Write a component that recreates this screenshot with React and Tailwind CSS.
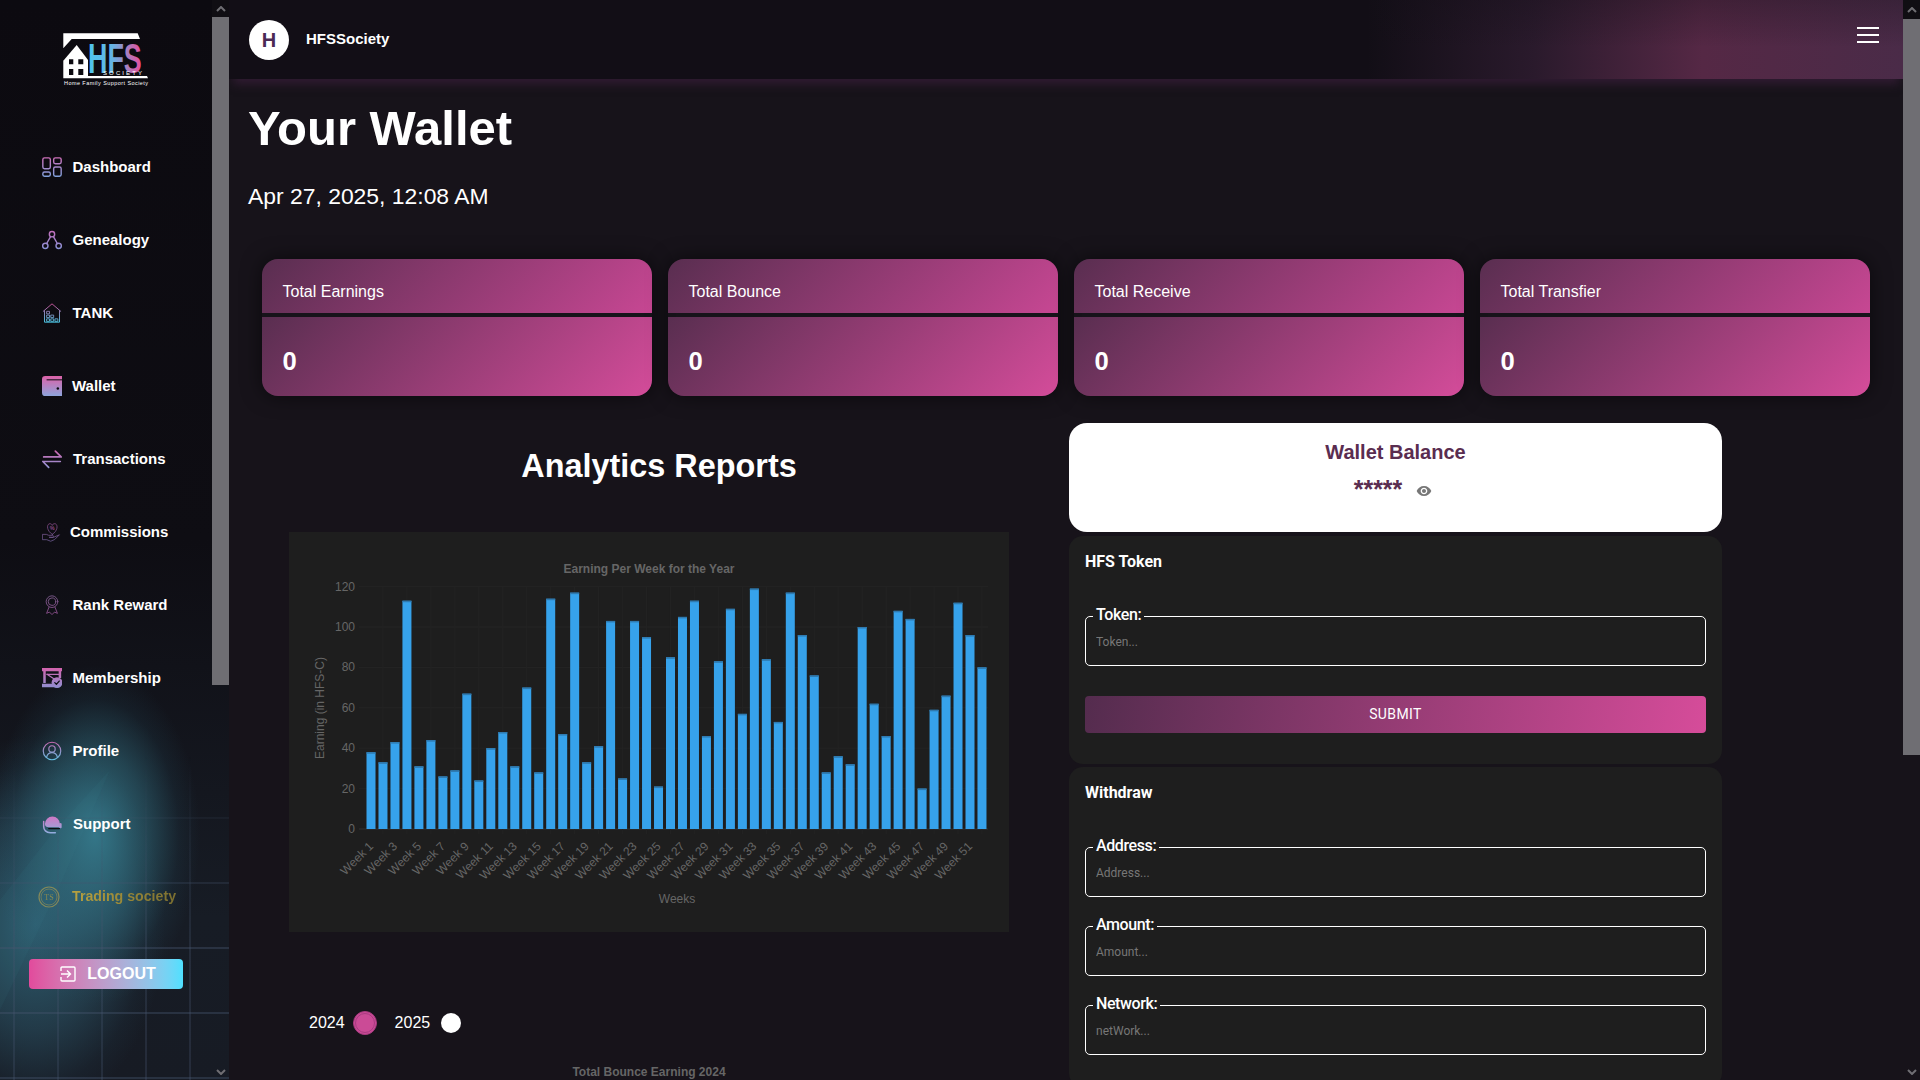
import React from 'react';

const weekValues = [38, 33, 43, 113, 31, 44, 26, 29, 67, 24, 40, 48, 31, 70, 28, 114, 47, 117, 33, 41, 103, 25, 103, 95, 21, 85, 105, 113, 46, 83, 109, 57, 119, 84, 53, 117, 96, 76, 28, 36, 32, 100, 62, 46, 108, 104, 20, 59, 66, 112, 96, 80];

const NavIcon = ({ id, from, to, children, className = 'w-5 h-5' }) => (
  <svg viewBox="0 0 24 24" className={`${className} shrink-0`} fill="none" stroke={`url(#${id})`} strokeWidth="1.7" strokeLinecap="round" strokeLinejoin="round">
    <defs>
      <linearGradient id={id} gradientUnits="userSpaceOnUse" x1="0" y1="0" x2="0" y2="24">
        <stop offset="0" stopColor={from} />
        <stop offset="1" stopColor={to} />
      </linearGradient>
    </defs>
    {children}
  </svg>
);

const navItems = [
  {
    label: 'Dashboard',
    icon: (
      <NavIcon id="ic-dash" from="#cf6db8" to="#7fa2dc">
        <rect x="1" y="1" width="9" height="13" rx="2" />
        <rect x="14" y="1" width="9" height="7" rx="2" />
        <rect x="1" y="18" width="9" height="5" rx="2" />
        <rect x="14" y="12" width="9" height="11" rx="2" />
      </NavIcon>
    ),
  },
  {
    label: 'Genealogy',
    icon: (
      <NavIcon id="ic-gen" from="#c56cb9" to="#8595d8">
        <circle cx="12" cy="5" r="3.2" />
        <circle cx="4" cy="19" r="3.2" />
        <circle cx="20" cy="19" r="3.2" />
        <path d="M10.3 8 5.6 16.2M13.7 8l4.7 8.2" />
      </NavIcon>
    ),
  },
  {
    label: 'TANK',
    icon: (
      <NavIcon id="ic-tank" from="#c8488f" to="#45c4e0">
        <path d="M1.5 10 12 1l10.5 9" strokeWidth="1.2" />
        <path d="M3 9v14h18V9" strokeWidth="1.2" />
        <path d="M6 10h3v3H6zM6 14.5h3v3H6zM11 14.5h3v3h-3zM6 19h3v3H6zM11 19h3v3h-3zM16 19h3v3h-3z" strokeWidth="1.1" />
      </NavIcon>
    ),
  },
  {
    label: 'Wallet',
    icon: (
      <NavIcon id="ic-wal" from="#dc62a8" to="#8ea4dc">
        <path d="M4 0h20v24H4a4 4 0 0 1-4-4V4a4 4 0 0 1 4-4z" fill="url(#ic-wal)" stroke="none" />
        <path d="M6 4.6h18" stroke="#0c0a10" strokeWidth="1.2" />
        <circle cx="19" cy="15" r="1.5" fill="#0c0a10" stroke="none" />
      </NavIcon>
    ),
    labelClass: 'ml-[10px]',
  },
  {
    label: 'Transactions',
    icon: (
      <NavIcon id="ic-tr" from="#d062ac" to="#8f9ad8">
        <path d="M2 9.5h21M16 2.5l7 7" strokeWidth="2" />
        <path d="M1 15h21M1 15l7 7" strokeWidth="2" />
      </NavIcon>
    ),
    labelClass: 'ml-[11px]',
  },
  {
    label: 'Commissions',
    icon: (
      <NavIcon id="ic-com" from="#8a4a88" to="#6a5a90" className="w-[19px] h-5">
        <path d="M13 15C5 10 6 1.5 10 1.5c1.6 0 2.6 1 3 2.2.4-1.2 1.4-2.2 3-2.2 4 0 5 8.500-3 13.500z" strokeWidth="1" />
        <path d="M1 15h4.500l3 1.200h4.500c2 0 2 2.500 0 2.500H9l5 .3 8-3.500-6 6-5 2.200-5-2H1z" strokeWidth="1" />
        <text x="13" y="9.500" fontSize="7" textAnchor="middle" fill="#8a4a88" stroke="none" fontFamily="Liberation Sans" fontWeight="700">%</text>
      </NavIcon>
    ),
    labelClass: 'ml-[9px]',
  },
  {
    label: 'Rank Reward',
    icon: (
      <NavIcon id="ic-rank" from="#7b5a8c" to="#8a4c8a">
        <circle cx="12" cy="8" r="7" strokeWidth="1.100" />
        <circle cx="12" cy="8" r="4.500" strokeWidth="1.100" />
        <path d="M8.500 14.500 5.500 22l3.500-1.500 3 3 3-3 3.500 1.500-3-7.500" strokeWidth="1.100" />
      </NavIcon>
    ),
  },
  {
    label: 'Membership',
    icon: (
      <NavIcon id="ic-mem" from="#d363ad" to="#8f8fd0">
        <path d="M0 0h24v4H0zM1.500 4h3v14h-3zM0 19h15v4H0zM20 4h3v8h-3z" fill="url(#ic-mem)" stroke="none" />
        <path d="M6 7.500 16 14" strokeWidth="1.500" />
        <path d="M6 7.500h14" strokeWidth="1.500" />
        <circle cx="18" cy="17.500" r="6.500" fill="url(#ic-mem)" stroke="none" />
        <path d="m15.300 17.500 2 2 3.400-3.800" stroke="#0c0f14" strokeWidth="1.500" />
      </NavIcon>
    ),
  },
  {
    label: 'Profile',
    icon: (
      <NavIcon id="ic-pro" from="#d064ae" to="#5cc5e6">
        <circle cx="12" cy="12" r="10.500" strokeWidth="1.400" />
        <circle cx="12" cy="9.500" r="3.800" strokeWidth="1.400" />
        <path d="M5.500 19.500c1-4 3.800-5.500 6.500-5.500s5.500 1.500 6.500 5.500" strokeWidth="1.400" />
      </NavIcon>
    ),
  },
  {
    label: 'Support',
    icon: (
      <NavIcon id="ic-sup" from="#d86fc0" to="#8fb0e0">
        <path d="M3.500 12a9 9 0 0 1 18 0v4H8c-2.500 0-4.500-1.500-4.500-4z" fill="url(#ic-sup)" stroke="none" />
        <path d="M2 9v6c0 4 3 7.500 8 7.500h6" strokeWidth="1.800" />
        <path d="M21.500 11.500h1.500v5h-1.500z" fill="url(#ic-sup)" strokeWidth="1" />
        <path d="M8 17.500h13" stroke="#0c1014" strokeWidth="1.400" />
      </NavIcon>
    ),
    labelClass: 'ml-[11px]',
  },
];

const Logo = () => (
  <svg viewBox="0 0 90 56" className="h-[56px] w-[90px]">
    <defs>
      <linearGradient id="logo-hfs" x1="0" y1="0" x2="1" y2="0">
        <stop offset="0" stopColor="#4fc6ec" />
        <stop offset="0.45" stopColor="#64b4e4" />
        <stop offset="1" stopColor="#ea4c9c" />
      </linearGradient>
    </defs>
    <path d="M1.300 1.300h74.400l2.300 5.700H9.700L1.300 16.300z" fill="#fff" />
    <path d="M14.700 13 1.300 28.700v17.600H26V28z" fill="#fff" />
    <path d="M7 27.300h4.300v5H7zM16.300 27.300h5v5h-5zM7 37h4.300v6H7zM16.300 37h5v6h-5z" fill="#0c0a10" />
    <path d="M26 44h59l1 2.300H26z" fill="#fff" />
    <text transform="translate(26 41) scale(0.64 1)" fontSize="42" fontWeight="700" fill="url(#logo-hfs)" fontFamily="Liberation Sans">HFS</text>
    <text x="41" y="43" fontSize="6" fill="#fff" fontFamily="Liberation Sans" textLength="39" lengthAdjust="spacing">SOCIETY</text>
    <text x="2" y="53" fontSize="5.500" fill="#fff" fontFamily="Liberation Sans" textLength="84" lengthAdjust="spacing">Home Family Support Society</text>
  </svg>
);

const ScrollChevron = ({ down }) => (
  <svg viewBox="0 0 10 6" className={`h-[6px] w-[10px] ${down ? 'rotate-180' : ''}`} fill="none" stroke="#6f6e73" strokeWidth="2">
    <path d="M1 5l4-4 4 4" />
  </svg>
);

const Sidebar = () => (
  <aside className="relative flex h-screen w-[229px] shrink-0 bg-[radial-gradient(ellipse_105px_170px_at_95px_835px,rgba(53,122,140,0.95)_0%,rgba(50,112,130,0.5)_50%,rgba(40,90,110,0.15)_80%,transparent_100%),radial-gradient(ellipse_130px_190px_at_35px_925px,rgba(50,105,125,0.85)_0%,rgba(48,95,115,0.45)_55%,rgba(40,80,100,0.12)_85%,transparent_100%),linear-gradient(180deg,#0c0a10_0%,#0e0d13_50%,#171c25_85%,#171b24_100%)]">
    <div className="absolute inset-0 bg-[#3f8a9e]/8 [clip-path:polygon(110px_770px,60px_885px,0_1010px,0_900px,55px_830px)]"></div>
    <div className="absolute inset-0 bg-[linear-gradient(rgba(70,85,110,0.4)_2px,transparent_2px),linear-gradient(90deg,rgba(70,85,110,0.3)_2px,transparent_2px)] bg-[size:44px_65px] bg-[position:13px_37px] [mask-image:linear-gradient(180deg,transparent_70%,black_88%)]"></div>
    <div className="relative flex w-[212px] flex-col">
      <div className="flex h-[130px] justify-start pt-[32px] pl-[62px]">
        <Logo />
      </div>
      <nav className="flex flex-col">
        {navItems.map(item => (
          <a key={item.label} className="flex h-[73px] items-center pl-[42px]">
            {item.icon}
            <span className={`mt-[1px] text-[15px] font-bold text-white ${item.labelClass || 'ml-[10.5px]'}`}>{item.label}</span>
          </a>
        ))}
        <a className="flex h-[73px] items-center pl-[38px]">
          <svg viewBox="0 0 22 22" className="h-[22px] w-[22px] shrink-0 opacity-70" fill="none" stroke="#a89a50">
            <circle cx="11" cy="11" r="10" strokeWidth="1.200" />
            <circle cx="11" cy="11" r="8" strokeWidth="0.700" />
            <text x="11" y="14" fontSize="8" textAnchor="middle" fill="#b09c40" stroke="none" fontFamily="Liberation Serif">TS</text>
          </svg>
          <span className="mt-[1px] ml-[12px] bg-linear-to-r from-[#b8a240] to-[#7b6f30] bg-clip-text text-[14.2px] font-bold text-transparent">Trading society</span>
        </a>
      </nav>
      <button className="mt-[26px] ml-[29px] flex h-[30px] w-[154px] items-center justify-center gap-[11px] rounded-[4px] bg-linear-to-r from-[#e24a9c] to-[#4ee0ff] pl-[4px] text-[16px] font-bold text-white">
        <svg viewBox="0 0 16 16" className="h-4 w-4" fill="none" stroke="#fff" strokeWidth="1.400">
          <path d="M1 5V2a1 1 0 0 1 1-1h12a1 1 0 0 1 1 1v12a1 1 0 0 1-1 1H2a1 1 0 0 1-1-1v-3" />
          <path d="M1 8h9M7 4.500 10.500 8 7 11.500" />
        </svg>
        LOGOUT
      </button>
    </div>
    <div className="relative flex w-[17px] flex-col items-center">
      <div className="flex h-[17px] w-full items-center justify-center bg-[#100e13]"><ScrollChevron /></div>
      <div className="h-[668px] w-full bg-[#6f6e73]"></div>
      <div className="mt-auto flex h-[17px] items-center"><ScrollChevron down /></div>
    </div>
  </aside>
);

const StatCard = ({ title }) => (
  <div className="overflow-hidden rounded-[16px] shadow-[0_0_20px_rgba(0,0,0,0.55)]">
    <div className="flex h-[54px] items-center bg-[linear-gradient(135deg,#592e50,#c74793)] pt-[12px] pl-[20.5px] text-[16px] text-white">{title}</div>
    <div className="mt-[4px] flex h-[79px] items-center bg-[linear-gradient(135deg,#592e50,#d44c9a)] pt-[10px] pl-[20.5px] text-[25.6px] font-bold text-white">0</div>
  </div>
);

const BarChart = () => {
  const x0 = 76;
  const step = 11.98;
  const base = 297;
  const unit = 2.02;
  return (
    <svg viewBox="0 0 720 400" className="block h-[400px] w-[720px] bg-[#1e1e1e]" fontFamily="Liberation Sans" fill="#666">
      <text x="360" y="41" textAnchor="middle" fontSize="12" fontWeight="700">Earning Per Week for the Year</text>
      {[0, 20, 40, 60, 80, 100, 120].map(v => (
        <g key={v}>
          <line x1="70" x2="699" y1={base - v * unit} y2={base - v * unit} stroke={v === 0 ? '#333' : '#242424'} />
          <text x="66" y={base - v * unit + 4} textAnchor="end" fontSize="12">{v}</text>
        </g>
      ))}
      {weekValues.map((v, i) => i % 2 === 1 && (
        <line key={i} x1={x0 + (i + 0.5) * step} x2={x0 + (i + 0.5) * step} y1="55" y2={base + 5} stroke="#232323" />
      ))}
      {weekValues.map((v, i) => (
        <g key={i}>
          <rect x={x0 + i * step + 1.5} y={base - v * unit} width="9" height={v * unit} fill="#36a2eb" />
          <rect x={x0 + i * step + 1.5} y={base - v * unit} width="9" height="1.500" fill="#2f7ab0" />
        </g>
      ))}
      {weekValues.map((v, i) => i % 2 === 0 && (
        <text key={i} x={x0 + (i + 0.5) * step + 3} y={base + 18} textAnchor="end" fontSize="12" transform={`rotate(-45 ${x0 + (i + 0.5) * step + 3} ${base + 18})`}>
          Week {i + 1}
        </text>
      ))}
      <text x="388" y="371" textAnchor="middle" fontSize="12">Weeks</text>
      <text transform="translate(35 176) rotate(-90)" textAnchor="middle" fontSize="12">Earning (in HFS-C)</text>
    </svg>
  );
};

const OutlinedField = ({ label, placeholder, className = '' }) => (
  <fieldset className={`h-[60px] rounded-[5px] border border-white ${className}`}>
    <legend className="ml-[7px] px-[3px] text-[16px] leading-[20px] font-medium tracking-[-0.4px] text-white">
      <span className="relative -top-[1px]">{label}</span>
    </legend>
    <input placeholder={placeholder} className="block h-[32px] w-full bg-transparent pl-[10px] text-[12px] text-white outline-none placeholder:text-[#777]" />
  </fieldset>
);

const App = () => (
  <div className="flex h-screen w-[1920px] overflow-hidden bg-[#17131a] font-['Liberation_Sans',Arial,sans-serif]">
    <Sidebar />
    <main className="min-w-0 flex-1 overflow-hidden">
      <header className="flex h-[79px] items-center justify-between bg-[linear-gradient(180deg,rgba(18,14,22,0.3),transparent_60%),linear-gradient(90deg,#120e16_0%,#120e16_68%,#2a1a2c_78%,#552845_88%,#4a2b48_100%)] pr-[24px] pl-[20px] shadow-[0_9px_9px_-4px_rgba(70,35,70,0.55)]">
        <div className="flex items-center">
          <div className="flex h-10 w-10 items-center justify-center rounded-full bg-white text-[20px] font-bold text-[#4b2a55]">H</div>
          <span className="ml-[17px] text-[15px] font-bold text-white">HFSSociety</span>
        </div>
        <div className="-mt-[9px] flex w-[22px] flex-col gap-[5px]">
          <div className="h-[2px] bg-white"></div>
          <div className="h-[2px] bg-white"></div>
          <div className="h-[2px] bg-white"></div>
        </div>
      </header>

      <div className="pt-[20px] pl-[19px]">
        <h1 className="text-[49px] leading-[58px] font-bold text-white">Your Wallet</h1>
        <p className="mt-[26px] text-[22.9px] leading-[26px] text-white">Apr 27, 2025, 12:08 AM</p>
      </div>

      <div className="mt-[50px] ml-[33px] grid w-[1608px] grid-cols-4 gap-4">
        {['Total Earnings', 'Total Bounce', 'Total Receive', 'Total Transfier'].map(t => (
          <StatCard key={t} title={t} />
        ))}
      </div>

      <div className="mt-[27px] ml-[20px] flex">
        <section className="w-[820px] shrink-0 pt-[24px]">
          <h2 className="text-center text-[32.4px] leading-[38px] font-bold text-white">Analytics Reports</h2>
          <div className="mt-[47px] ml-[40px]">
            <BarChart />
          </div>
          <div className="mt-[79px] ml-[60px] flex h-[24px] items-center text-[16px] text-white">
            <span>2024</span>
            <span className="ml-[8px] h-6 w-6 rounded-full border border-[#a83a80] bg-[#cb4b96] outline-1 -outline-offset-3 outline-[#a83a80]"></span>
            <span className="ml-[18px]">2025</span>
            <span className="ml-[11px] h-5 w-5 rounded-full bg-white"></span>
          </div>
          <p className="mt-[30px] ml-[40px] w-[720px] text-center text-[12px] leading-[14px] font-bold text-[#666]">Total Bounce Earning 2024</p>
        </section>

        <section className="w-[653px] shrink-0 font-['Roboto',sans-serif]">
          <div className="flex h-[109px] flex-col items-center rounded-[18px] bg-white pt-[16px] font-['Liberation_Sans',sans-serif] text-[#5a2d50]">
            <h3 className="text-[20px] leading-[26px] font-bold">Wallet Balance</h3>
            <div className="mt-[10px] mr-[5px] flex items-center">
              <span className="text-[25px] leading-[28px] font-bold">*****</span>
              <svg viewBox="0 0 24 24" className="mt-[4px] ml-[14px] h-4 w-4" fill="#777">
                <path d="M12 4.5C7 4.5 2.730 7.610 1 12c1.730 4.390 6 7.500 11 7.500s9.270-3.110 11-7.500c-1.730-4.390-6-7.500-11-7.500zM12 17c-2.760 0-5-2.240-5-5s2.240-5 5-5 5 2.240 5 5-2.240 5-5 5zm0-8c-1.660 0-3 1.340-3 3s1.340 3 3 3 3-1.340 3-3-1.340-3-3-3z" />
              </svg>
            </div>
          </div>

          <div className="mt-[4px] h-[228px] rounded-[14px] bg-[#1e1e1e] px-[16px] pt-[16px]">
            <h4 className="text-[16px] leading-[20px] font-bold text-white">HFS Token</h4>
            <OutlinedField label="Token:" placeholder="Token..." className="mt-[34px]" />
            <button className="mt-[30px] h-[37px] w-full rounded-[4px] bg-[linear-gradient(100deg,#542c4e,#d64c9a)] text-[14px] tracking-[0.4px] text-white">SUBMIT</button>
          </div>

          <div className="mt-[3px] h-[320px] rounded-[14px] bg-[#1e1e1e] px-[16px] pt-[16px]">
            <h4 className="text-[16px] leading-[20px] font-bold text-white">Withdraw</h4>
            <OutlinedField label="Address:" placeholder="Address..." className="mt-[34px]" />
            <OutlinedField label="Amount:" placeholder="Amount..." className="mt-[19px]" />
            <OutlinedField label="Network:" placeholder="netWork..." className="mt-[19px]" />
          </div>
        </section>
      </div>
    </main>
    <div className="relative flex h-screen w-[17px] shrink-0 flex-col items-center bg-[#17131a]">
      <div className="flex h-[19px] w-full items-center justify-center bg-[#100e13]"><ScrollChevron /></div>
      <div className="h-[736px] w-full bg-[#6f6e73]"></div>
      <div className="mt-auto flex h-[17px] items-center"><ScrollChevron down /></div>
    </div>
  </div>
);

export default App;
